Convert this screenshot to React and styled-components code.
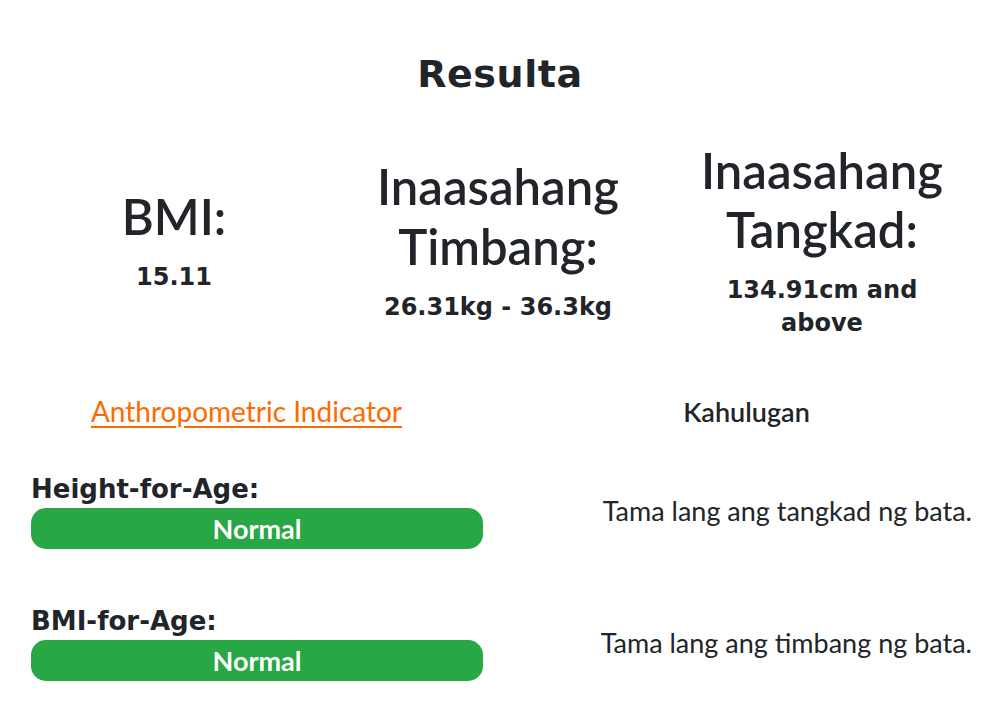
import React from "react";
import styled, { createGlobalStyle } from "styled-components";

const GlobalStyle = createGlobalStyle`
  body {
    margin: 0;
    background: #ffffff;
    color: #212529;
    font-family: Lato, "Liberation Sans", sans-serif;
  }
`;

const Page = styled.div`
  width: 1000px;
  padding-top: 52px;
`;

const Title = styled.h2`
  margin: 0;
  text-align: center;
  font-family: "DejaVu Sans", sans-serif;
  font-weight: 700;
  font-size: 38px;
  line-height: 1.2;
  letter-spacing: 0.6px;
`;

const StatsRow = styled.div`
  display: grid;
  grid-template-columns: repeat(3, 324px);
  padding: 0 12px;
  align-items: center;
  margin-top: 43px;
`;

const Stat = styled.div`
  text-align: center;
`;

const StatLabel = styled.h1`
  margin: 0;
  font-family: Lato, sans-serif;
  font-weight: 600;
  font-size: 49px;
  line-height: 1.22;
`;

const StatValue = styled.h4`
  margin: 14px 0 0;
  font-family: "DejaVu Sans", sans-serif;
  font-weight: 700;
  font-size: 24px;
  line-height: 33px;
`;

const Table = styled.div`
  display: grid;
  grid-template-columns: 493px 1fr;
  margin-top: 54px;
  row-gap: 54px;
  align-items: center;
`;

const HeadCell = styled.div`
  text-align: center;
  font-family: Lato, sans-serif;
  font-size: ${(p) => (p.$link ? "28px" : "27px")};
  font-weight: ${(p) => (p.$link ? 400 : 600)};
  color: ${(p) => (p.$link ? "#ff6a00" : "#212529")};
  text-decoration: ${(p) => (p.$link ? "underline" : "none")};
  text-underline-offset: 4px;
  margin-bottom: -11px;
`;

const IndicatorCell = styled.div`
  padding-left: 31px;
`;

const IndicatorLabel = styled.div`
  font-family: "DejaVu Sans", sans-serif;
  font-weight: 700;
  font-size: 26px;
  line-height: 37px;
`;

const StatusBar = styled.div`
  width: 452px;
  height: 41px;
  border-radius: 15px;
  background: ${(p) => p.$color};
  color: #ffffff;
  display: flex;
  align-items: center;
  justify-content: center;
  font-family: Lato, sans-serif;
  font-weight: 700;
  font-size: 27px;
`;

const Meaning = styled.div`
  text-align: right;
  padding-right: 28px;
  font-family: Lato, sans-serif;
  font-size: 27px;
`;

const stats = [
  { label: ["BMI:"], value: ["15.11"] },
  { label: ["Inaasahang", "Timbang:"], value: ["26.31kg - 36.3kg"] },
  { label: ["Inaasahang", "Tangkad:"], value: ["134.91cm and", "above"] },
];

const rows = [
  { label: "Height-for-Age:", status: "Normal", meaning: "Tama lang ang tangkad ng bata." },
  { label: "BMI-for-Age:", status: "Normal", meaning: "Tama lang ang timbang ng bata." },
];

export default function App() {
  return (
    <Page>
      <GlobalStyle />
      <Title>Resulta</Title>
      <StatsRow>
        {stats.map((s, i) => (
          <Stat key={i}>
            <StatLabel>
              {s.label.map((l, j) => (
                <div key={j}>{l}</div>
              ))}
            </StatLabel>
            <StatValue>
              {s.value.map((v, j) => (
                <div key={j}>{v}</div>
              ))}
            </StatValue>
          </Stat>
        ))}
      </StatsRow>
      <Table>
        <HeadCell $link>Anthropometric Indicator</HeadCell>
        <HeadCell>Kahulugan</HeadCell>
        {rows.map((r, i) => (
          <React.Fragment key={i}>
            <IndicatorCell>
              <IndicatorLabel>{r.label}</IndicatorLabel>
              <StatusBar $color="#28a745">{r.status}</StatusBar>
            </IndicatorCell>
            <Meaning>{r.meaning}</Meaning>
          </React.Fragment>
        ))}
      </Table>
    </Page>
  );
}
